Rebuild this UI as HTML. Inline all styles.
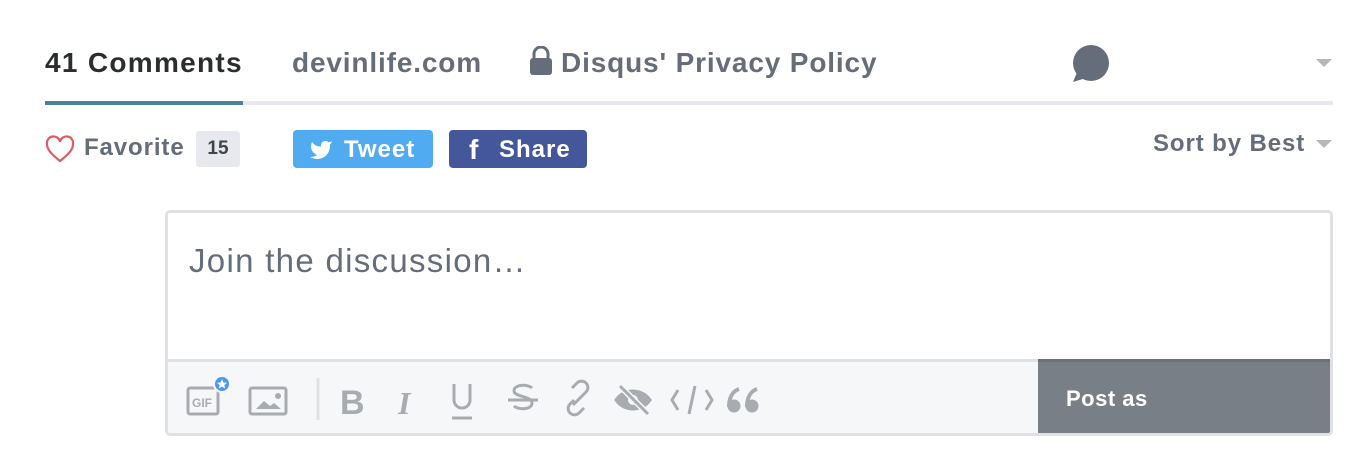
<!DOCTYPE html>
<html><head><style>
body{margin:0;width:1370px;height:474px;background:#fff;font-family:"Liberation Sans",Arial,sans-serif;position:relative;overflow:hidden}
.a{position:absolute;white-space:nowrap}
.t{font-size:28px;font-weight:bold;top:47px;letter-spacing:0.85px}
</style></head><body>
<div class="a t" style="left:45px;color:#2a2e2e;letter-spacing:1.3px">41 Comments</div>
<div class="a t" style="left:292px;color:#656c7a">devinlife.com</div>
<svg class="a" style="left:529px;top:46px" width="24" height="30" viewBox="0 0 24 30"><path d="M5 13V8a7 7 0 0 1 14 0v5" fill="none" stroke="#656c7a" stroke-width="3"/><rect x="1" y="12" width="22" height="17" rx="3" fill="#656c7a"/></svg>
<div class="a t" style="left:561px;color:#656c7a">Disqus' Privacy Policy</div>
<svg class="a" style="left:1070px;top:44px" width="40" height="40" viewBox="0 0 40 40"><circle cx="21" cy="19" r="18" fill="#656c7a"/><path d="M3 38l5-12 8 8z" fill="#656c7a"/></svg>
<svg class="a" style="left:1316px;top:59px" width="18" height="10"><path d="M0 0h16l-8 8z" fill="#b5b8bb"/></svg>
<div class="a" style="left:45px;top:101px;width:1288px;height:4px;background:#e7e9ee"></div>
<div class="a" style="left:45px;top:101px;width:198px;height:4px;background:#4a8399"></div>
<svg class="a" style="left:45px;top:135px" width="30" height="28" viewBox="0 0 30 28"><path d="M15 26C5 18 2 14 2 9a6.5 6.5 0 0 1 13-2a6.5 6.5 0 0 1 13 2c0 5-3 9-13 17z" fill="none" stroke="#e05a5e" stroke-width="2.2"/></svg>
<div class="a" style="left:84px;top:134px;font-size:24px;font-weight:bold;color:#656c7a;letter-spacing:0.9px">Favorite</div>
<div class="a" style="left:196px;top:131px;width:44px;height:36px;background:#e7e9ee;border-radius:3px;font-size:19px;font-weight:bold;color:#3f4549;text-align:center;line-height:36px">15</div>
<div class="a" style="left:293px;top:130px;width:140px;height:38px;background:#50abf1;border-radius:4px;color:#fff;font-size:24px;font-weight:bold;line-height:40px"><svg style="position:absolute;left:16px;top:8px" width="24" height="22" viewBox="0 0 24 22"><path d="M23 3a10.9 10.9 0 0 1-3.14 1.53 4.48 4.48 0 0 0-7.86 3v1A10.66 10.66 0 0 1 3 4s-4 9 5 13a11.64 11.64 0 0 1-7 2c9 5 20 0 20-11.5a4.5 4.5 0 0 0-.08-.83A7.72 7.72 0 0 0 23 3z" fill="#fff"/></svg><span style="position:absolute;left:51px;letter-spacing:1px">Tweet</span></div>
<div class="a" style="left:449px;top:130px;width:138px;height:38px;background:#44579a;border-radius:4px;color:#fff;font-size:24px;font-weight:bold;line-height:40px"><span style="position:absolute;left:20px;font-size:28px">f</span><span style="position:absolute;left:50px;letter-spacing:1px">Share</span></div>
<div class="a" style="left:1153px;top:130px;font-size:24px;font-weight:bold;color:#656c7a;letter-spacing:0.9px">Sort by Best</div>
<svg class="a" style="left:1316px;top:140px" width="18" height="10"><path d="M0 0h16l-8 8z" fill="#b5b8bb"/></svg>
<div class="a" style="left:165px;top:210px;width:1162px;height:220px;border:3px solid #dfe1e5;border-radius:5px;overflow:hidden">
<div class="a" style="left:21px;top:29px;font-size:33px;color:#656c7a;letter-spacing:1.3px">Join the discussion…</div>
<div class="a" style="left:0;top:146px;width:1162px;height:74px;background:#f6f7f9;border-top:3px solid #dfe1e5"></div>
<div class="a" style="left:870px;top:146px;width:295px;height:77px;background:#787f87;border-top:3px solid #6a7179"></div>
<div class="a" style="left:898px;top:173px;font-size:22px;font-weight:bold;color:#fff;letter-spacing:0.5px">Post as</div>
</div>
<svg class="a" style="left:180px;top:372px" width="440" height="52" viewBox="0 0 440 52" fill="none" stroke="#a8abb0" stroke-width="3">
<rect x="8" y="16" width="30" height="26" rx="2"/><text x="12" y="35" font-size="12" font-weight="bold" fill="#a8abb0" stroke="none" font-family="Liberation Sans">GIF</text>
<circle cx="42" cy="12" r="8" fill="#4d98f0" stroke="#f6f7f9" stroke-width="2"/><path d="M42 7l1.5 3.5 3.5.3-2.7 2.3.9 3.4-3.2-1.9-3.2 1.9.9-3.4-2.7-2.3 3.5-.3z" fill="#fff" stroke="none"/>
<rect x="70" y="16" width="36" height="26" rx="2"/><path d="M76 37l8-8 6 5 4-3 7 6z" fill="#a8abb0" stroke="none"/><circle cx="98" cy="24" r="3" fill="#a8abb0" stroke="none"/>
<path d="M138 6v42" stroke="#dfe1e5"/>
<text x="160" y="42" font-size="34" font-weight="bold" fill="#a8abb0" stroke="none" font-family="Liberation Sans">B</text>
<text x="218" y="42" font-size="32" font-weight="bold" font-style="italic" fill="#a8abb0" stroke="none" font-family="Liberation Serif">I</text>
<path d="M274 12v16a8 8 0 0 0 16 0V12M272 46h20"/>
<path d="M328 28h30M352 16c-4-4-18-4-18 3 0 6 18 5 18 12 0 7-14 7-18 3"/>
<path d="M394 28l-4 4a6 6 0 0 0 9 9l5-5M402 24l4-4a6 6 0 0 0-9-9l-5 5M393 33l11-11"/>
</svg>
<svg class="a" style="left:612px;top:380px" width="160" height="40" viewBox="0 0 160 40" fill="none" stroke="#a8abb0" stroke-width="3">
<path d="M4 20c8-12 26-12 34 0c-8 12-26 12-34 0z" fill="#a8abb0"/><circle cx="21" cy="20" r="5" fill="#f6f7f9" stroke="none"/><path d="M8 6l28 28" stroke="#f6f7f9" stroke-width="6"/><path d="M8 6l28 28"/>
<path d="M66 10l-6 10 6 10M94 10l6 10-6 10M83 6l-6 28"/>
<circle cx="122" cy="26" r="6.5" fill="#a8abb0" stroke="none"/><path d="M117 27c0-10 4-16 10-18" stroke-width="4"/>
<circle cx="140" cy="26" r="6.5" fill="#a8abb0" stroke="none"/><path d="M135 27c0-10 4-16 10-18" stroke-width="4"/>
</svg>
</body></html>
